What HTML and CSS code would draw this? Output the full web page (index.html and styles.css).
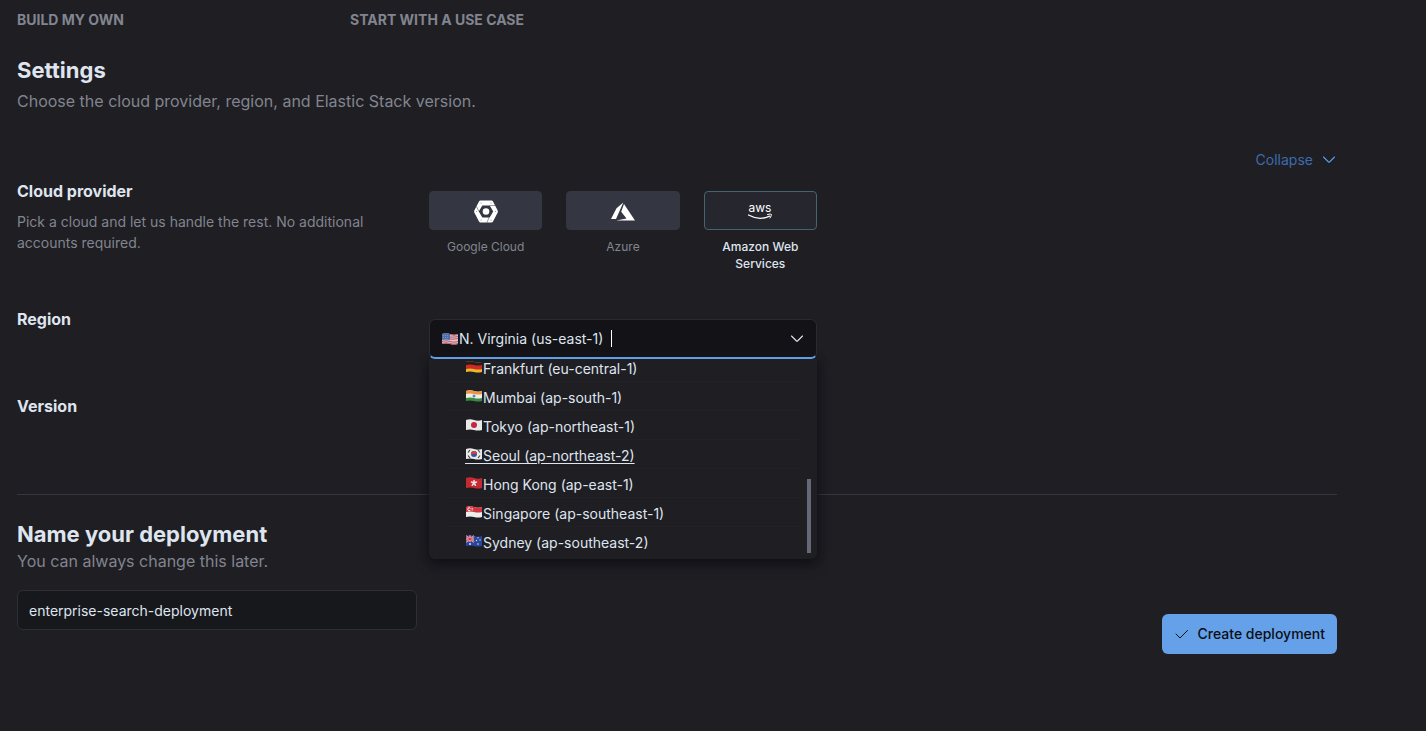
FILE: index.html
```html
<!DOCTYPE html>
<html lang="en">
<head>
<meta charset="utf-8">
<title>Create deployment</title>
<link rel="stylesheet" href="styles.css">
</head>
<body>
<svg class="sprite" aria-hidden="true">
  <symbol id="flag-us" viewBox="0 0 16 12"><path fill="#d9c4ca" d="M0 1Q4-.5 8 1T16 1V11Q12 12 8 11T0 11Z"/><path stroke="#bf5964" fill="none" d="M0 1.500Q4 0 8 1.500T16 1.500M7 4Q12 4.500 16 3.500M7 6Q12 6.500 16 5.500M0 8.500Q4 7 8 8.500T16 8.500M0 10.500Q4 9 8 10.500T16 10.500"/><path fill="#4d6fae" d="M0 1Q4-.5 8 1V7Q4 6 0 7Z"/><path stroke="#8ba4d0" stroke-width=".7" stroke-dasharray="1 1" d="M1 2.500H7M1 4.500H7"/></symbol>
  <symbol id="flag-de" viewBox="0 0 16 12"><path fill="#e9b82c" d="M0 1Q4-.5 8 1T16 1V11Q12 12 8 11T0 11Z"/><path fill="#d22a22" d="M0 1Q4-.5 8 1T16 1V8Q12 9 8 8T0 8Z"/><path fill="#202020" d="M0 1Q4-.5 8 1T16 1V4Q12 5 8 4T0 4Z"/></symbol>
  <symbol id="flag-in" viewBox="0 0 16 12"><path fill="#398b3d" d="M0 1Q4-.5 8 1T16 1V11Q12 12 8 11T0 11Z"/><path fill="#eeeeea" d="M0 1Q4-.5 8 1T16 1V8Q12 9 8 8T0 8Z"/><path fill="#ef9440" d="M0 1Q4-.5 8 1T16 1V4Q12 5 8 4T0 4Z"/><circle cx="8" cy="6" r="1.500" fill="#7180bd"/></symbol>
  <symbol id="flag-jp" viewBox="0 0 16 12"><path fill="#e9e9e7" d="M0 1Q4-.5 8 1T16 1V11Q12 12 8 11T0 11Z"/><circle cx="8" cy="6" r="3" fill="#c32643"/></symbol>
  <symbol id="flag-kr" viewBox="0 0 16 12"><path fill="#e9e9e7" d="M0 1Q4-.5 8 1T16 1V11Q12 12 8 11T0 11Z"/><circle cx="8" cy="6" r="3" fill="#31549b"/><path fill="#c9404c" d="M5.200 7A3 3 0 0 1 10.900 5Q9.500 6.500 8 6T5.200 7Z"/><path stroke="#444" stroke-width="1.200" d="M2 4.500 4 2M12 2 14 4.500M2 7.500 4 10M12 10 14 7.500"/></symbol>
  <symbol id="flag-hk" viewBox="0 0 16 12"><path fill="#c52a30" d="M0 1Q4-.5 8 1T16 1V11Q12 12 8 11T0 11Z"/><path stroke="#f6dddd" stroke-width="1.500" stroke-linecap="round" d="M8 6V3.500M8 6 10.500 5M8 6 9.500 8.300M8 6 6.300 8.300M8 6 5.500 5"/></symbol>
  <symbol id="flag-sg" viewBox="0 0 16 12"><path fill="#eeeeec" d="M0 1Q4-.5 8 1T16 1V11Q12 12 8 11T0 11Z"/><path fill="#d43440" d="M0 1Q4-.5 8 1T16 1V6Q12 7 8 6T0 6Z"/><path fill="none" stroke="#fff" d="M4 2A1.500 1.500 0 1 0 4 4.500"/><path stroke="#f7c8cb" stroke-dasharray="1 .6" d="M4.500 2.500H7.500M4.500 4H7.500"/></symbol>
  <symbol id="flag-au" viewBox="0 0 16 12"><path fill="#29479a" d="M0 1Q4-.5 8 1T16 1V11Q12 12 8 11T0 11Z"/><path stroke="#e5dbe4" stroke-width="1.600" d="M0 1 8 7M8 1 0 7M4 .5V7M0 4H8"/><path stroke="#cb3349" stroke-width=".9" d="M0 1 8 7M8 1 0 7M4 .5V7M0 4H8"/><g fill="#dbe1f0"><circle cx="4" cy="9" r="1"/><circle cx="12" cy="2.800" r=".7"/><circle cx="10.500" cy="5.500" r=".7"/><circle cx="14" cy="5" r=".7"/><circle cx="12" cy="9" r=".8"/></g></symbol>
  <symbol id="chevron" viewBox="0 0 16 16"><path fill="none" stroke="currentColor" stroke-width="1.100" stroke-linecap="round" stroke-linejoin="round" d="M2.500 5 7.500 10Q8 10.500 8.500 10L13.500 5"/></symbol>
</svg>
<main class="page">
  <nav class="tabs">
    <a class="tab" href="#own">Build my own</a>
    <a class="tab" href="#case">Start with a use case</a>
  </nav>

  <section class="settings">
    <h2 class="title">Settings</h2>
    <p class="subtitle">Choose the cloud provider, region, and Elastic Stack version.</p>
    <div class="collapse-row">
      <button class="collapse" type="button">Collapse <svg class="icon"><use href="#chevron"/></svg></button>
    </div>

    <div class="row row-provider">
      <div class="about">
        <h3 class="label">Cloud provider</h3>
        <p class="hint">Pick a cloud and let us handle the rest. No additional accounts required.</p>
      </div>
      <div class="providers">
        <div class="provider">
          <button class="card" type="button" aria-labelledby="p-gcp">
            <svg class="logo" viewBox="0 0 26 24"><path fill="#fff" fill-rule="evenodd" d="M7.500 1.500H18.500Q19.500 1.500 20 2.500L24.700 11.500Q25 12.500 24.700 13.500L20 22.500Q19.500 23.500 18.500 23.500H7.500Q6.500 23.500 6 22.500L1.300 13.500Q1 12.500 1.300 11.500L6 2.500Q6.500 1.500 7.500 1.500ZM9.300 6.500 5.800 12.500 9.300 18.500H16.700L20.200 12.500 16.700 6.500Z"/><circle cx="13" cy="12.500" r="3.300" fill="#fff"/><path stroke="#343741" stroke-width=".5" d="M16.500 6.500 22 6.500M6 12.500 3.500 7.500M16 18.500 14 23.500"/><g fill="#8b8f9a"><circle cx="8" cy="4" r=".6"/><circle cx="18" cy="4" r=".6"/><circle cx="3.600" cy="12.500" r=".6"/><circle cx="22.400" cy="12.500" r=".6"/><circle cx="8" cy="21" r=".6"/><circle cx="18" cy="21" r=".6"/></g></svg>
          </button>
          <span class="name" id="p-gcp">Google Cloud</span>
        </div>
        <div class="provider">
          <button class="card" type="button" aria-labelledby="p-azure">
            <svg class="logo" viewBox="0 0 26 24"><path fill="#fff" d="M13.300 3.500 6.500 9.200 1 20H6ZM14 5 11.200 12.800 16.500 19.500 6.300 21.500H25Z"/></svg>
          </button>
          <span class="name" id="p-azure">Azure</span>
        </div>
        <div class="provider">
          <button class="card card-selected" type="button" aria-pressed="true" aria-labelledby="p-aws">
            <svg class="logo" viewBox="0 0 26 24"><text class="aws" x="13" y="13" text-anchor="middle">aws</text><path fill="none" stroke="#fff" stroke-width="1.300" stroke-linecap="round" d="M1.500 16Q12.500 22 22.500 17.100"/><path fill="none" stroke="#fff" stroke-linecap="round" stroke-linejoin="round" d="M20.500 15.500Q24 14.500 24.400 15.400T23 19"/></svg>
          </button>
          <span class="name name-selected" id="p-aws">Amazon Web Services</span>
        </div>
      </div>
    </div>

    <div class="row row-region">
      <label class="label" for="region">Region</label>
      <div class="combo">
        <div class="combo-box">
          <svg class="flag"><use href="#flag-us"/></svg>
          <input class="combo-input" id="region" type="text" role="combobox" aria-expanded="true" aria-controls="regions" value="N. Virginia (us-east-1)">
          <span class="caret"></span>
          <svg class="icon combo-icon"><use href="#chevron"/></svg>
        </div>
        <div class="menu">
          <ul class="options" id="regions" role="listbox">
            <li class="option" role="option"><svg class="flag"><use href="#flag-de"/></svg>Frankfurt (eu-central-1)</li>
            <li class="option" role="option"><svg class="flag"><use href="#flag-in"/></svg>Mumbai (ap-south-1)</li>
            <li class="option" role="option"><svg class="flag"><use href="#flag-jp"/></svg>Tokyo (ap-northeast-1)</li>
            <li class="option option-active" role="option"><svg class="flag"><use href="#flag-kr"/></svg>Seoul (ap-northeast-2)</li>
            <li class="option" role="option"><svg class="flag"><use href="#flag-hk"/></svg>Hong Kong (ap-east-1)</li>
            <li class="option" role="option"><svg class="flag"><use href="#flag-sg"/></svg>Singapore (ap-southeast-1)</li>
            <li class="option" role="option"><svg class="flag"><use href="#flag-au"/></svg>Sydney (ap-southeast-2)</li>
          </ul>
          <span class="thumb"></span>
        </div>
      </div>
    </div>

    <div class="row row-version">
      <h3 class="label">Version</h3>
    </div>
  </section>

  <section class="deploy">
    <div class="naming">
      <h2 class="title"><label for="name">Name your deployment</label></h2>
      <p class="subtitle subtitle-tight">You can always change this later.</p>
      <input class="field" id="name" type="text" value="enterprise-search-deployment">
    </div>
    <button class="create" type="button"><svg class="icon" viewBox="0 0 16 16"><path fill="none" stroke="currentColor" stroke-linecap="round" stroke-linejoin="round" d="M2 8 6 12 13.500 4.500"/></svg>Create deployment</button>
  </section>
</main>
</body>
</html>
```

FILE: styles.css
```css
* { box-sizing: border-box; }

body {
  margin: 0;
  background: #1f1e23;
  color: #dfe5ef;
  font: 14px/20px Inter, "Liberation Sans", sans-serif;
}

h2, h3, p, ul { margin: 0; padding: 0; }
button, input { font: inherit; color: inherit; }
ul { list-style: none; }

.sprite { display: none; }
.icon { width: 16px; height: 16px; flex: none; }
.flag { width: 16px; height: 12px; flex: none; }

.page { padding: 10px 89px 24px 17px; }

.tabs { display: flex; }
.tab {
  width: 333px;
  color: #81858f;
  font-weight: 700;
  text-decoration: none;
  text-transform: uppercase;
}

.settings {
  padding: 24px 0 76px;
  border-bottom: 1px solid #343741;
}
.title { font-size: 22px; line-height: 32px; font-weight: 700; }
.subtitle { margin-top: 4px; font-size: 16px; line-height: 22px; color: #81858f; }
.subtitle-tight { margin-top: 0; }

.collapse-row { display: flex; justify-content: flex-end; margin-top: 38px; }
.collapse {
  display: flex;
  align-items: center;
  gap: 8px;
  padding: 0;
  border: 0;
  background: none;
  color: #3c6cae;
}
.collapse .icon { color: #5b9be8; }

.row {
  display: grid;
  grid-template-columns: 388px 388px;
  gap: 24px;
}
.row-provider { margin-top: 9px; }
.row-region { margin-top: 47px; }
.row-version { margin-top: 35px; }
.label { font-size: 16px; line-height: 24px; font-weight: 700; }
.row-region .label { margin-top: -12px; }
.hint { margin-top: 8px; line-height: 21px; color: #81858f; }

.providers { display: grid; grid-template-columns: repeat(3, 1fr); gap: 24px; padding-top: 12px; }
.provider { display: flex; flex-direction: column; gap: 8px; }
.card {
  display: flex;
  justify-content: center;
  align-items: center;
  height: 39px;
  padding: 0;
  border: 1px solid #343741;
  border-radius: 4px;
  background: #343741;
}
.card-selected { background: #25262e; border-color: #46646f; }
.logo { width: 26px; height: 24px; }
.aws { font: 400 12px Inter, sans-serif; fill: #fff; }
.name {
  padding: 0 12px;
  font-size: 12px;
  line-height: 17px;
  text-align: center;
  color: #81858f;
}
.name-selected { color: #dfe5ef; font-weight: 500; }

.combo { position: relative; }
.combo-box {
  position: relative;
  z-index: 2;
  display: flex;
  align-items: center;
  height: 40px;
  padding: 0 11px 0 12px;
  border: 1px solid #2a2b31;
  border-bottom: 2px solid #609fe5;
  border-radius: 6px;
  background: #131317;
}
.combo-input {
  width: 153px;
  padding: 0 0 0 1px;
  border: 0;
  outline: 0;
  background: none;
}
.caret { width: 1px; height: 17px; background: #fff; }
.combo-icon { margin-left: auto; }

.menu {
  position: absolute;
  z-index: 1;
  top: 100%;
  left: 0;
  right: 0;
  height: 200px;
  overflow: hidden;
  border-radius: 0 0 6px 6px;
  background: #1f1e23;
  box-shadow: 0 6px 12px rgba(10, 12, 16, .6), 0 0 8px rgba(18, 22, 26, .7);
}
.options { margin: -6px 16px 0; }
.option {
  height: 29px;
  padding: 6px 0 0 20px;
  border-bottom: 1px solid #222126;
}
.option:last-child { border-bottom-color: transparent; }
.option .flag {
  width: 18px;
  height: 16px;
  padding: 0 1px 3px;
  border-bottom: 1px solid transparent;
  vertical-align: -3px;
}
.option-active { text-decoration: underline; text-underline-offset: 2px; }
.option-active .flag { border-bottom-color: currentColor; }
.thumb {
  position: absolute;
  right: 6px;
  bottom: 6px;
  width: 4px;
  height: 74px;
  background: #656976;
}

.deploy {
  display: flex;
  justify-content: space-between;
  align-items: flex-end;
  padding-top: 23px;
}
.field {
  display: block;
  width: 400px;
  height: 40px;
  margin-top: 18px;
  padding: 0 11px;
  border: 1px solid #2d2f34;
  border-radius: 6px;
  background: #17181c;
}
.create {
  display: flex;
  align-items: center;
  gap: 8px;
  height: 40px;
  margin-bottom: -24px;
  padding: 0 12px;
  border: 0;
  border-radius: 6px;
  background: #65a1e8;
  color: #0b0e14;
  font-weight: 500;
}
```
